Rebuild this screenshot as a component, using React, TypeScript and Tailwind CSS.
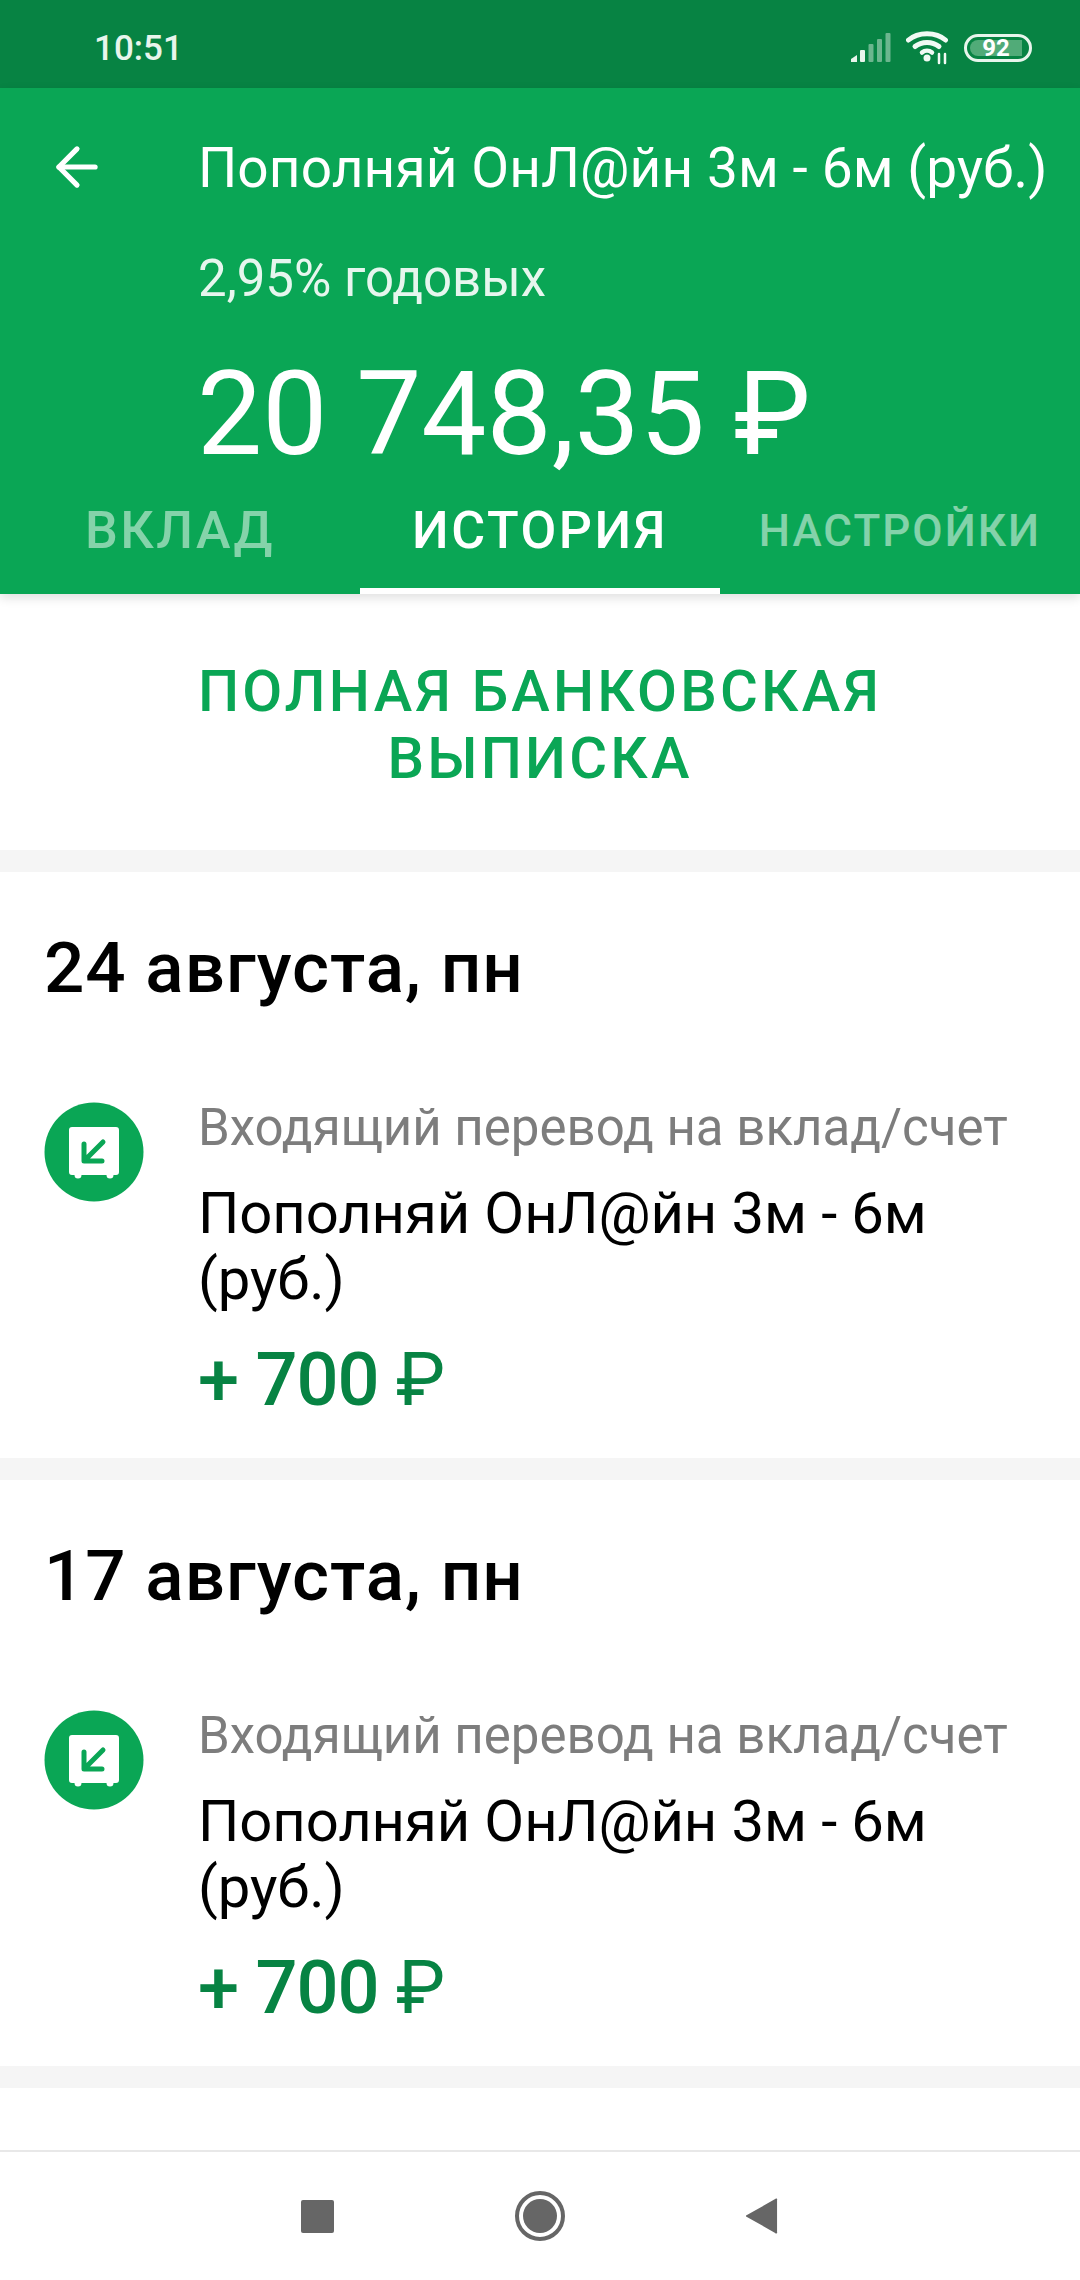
import { ArrowLeft } from "lucide-react";

const FONT = "font-['Roboto','Noto_Sans',sans-serif]";

// ── Status bar glyphs ─────────────────────────────────────────────

function SignalIcon() {
  return (
    <svg width="42" height="30" viewBox="0 0 42 30" fill="#e8f5ec">
      <path d="M1 29v-3l6-4v7z" />
      <rect x="10" y="17" width="5" height="12" rx="1" />
      <rect x="18.500" y="11" width="5" height="18" rx="1" opacity="0.45" />
      <rect x="27" y="6" width="5" height="23" rx="1" opacity="0.45" />
      <rect x="35.500" y="0" width="5" height="29" rx="1" opacity="0.45" />
    </svg>
  );
}

function WifiIcon() {
  return (
    <svg width="44" height="34" viewBox="0 0 44 34" fill="none" stroke="#f1faf4" strokeLinecap="round">
      <path d="M2.500 9C12 0.500 30 0.500 39.500 9" strokeWidth="5" />
      <path d="M9 15.500C15.500 10 26.500 10 33 15.500" strokeWidth="5" />
      <path d="M16 21.500C19 19 23 19 26 21.500" strokeWidth="4.500" />
      <circle cx="21" cy="27" r="3.500" fill="#f1faf4" stroke="none" />
      <path d="M33 23v9M39 23v9" strokeWidth="2.500" />
    </svg>
  );
}

function Battery() {
  return (
    <div className="flex h-[28px] w-[68px] items-center rounded-full border-[3px] border-[#e8f5ec] p-[3px]">
      <div className="flex h-full w-[52px] items-center justify-center rounded-l-full rounded-r-[6px] bg-[#51ab78] text-[24px] font-bold leading-none text-white">
        92
      </div>
    </div>
  );
}

// ── Deposit icon ──────────────────────────────────────────────────

function IncomingIcon() {
  return (
    <svg width="100" height="100" viewBox="0 0 100 100" className="shrink-0">
      <circle cx="50" cy="50" r="49.500" fill="#0aa655" />
      <path
        d="M25 28a3 3 0 0 1 3-3h44a3 3 0 0 1 3 3v42a3 3 0 0 1-3 3h-2.500a3.500 3.500 0 0 1-7 0h-25a3.500 3.500 0 0 1-7 0H28a3 3 0 0 1-3-3z"
        fill="#fff"
      />
      <path
        d="M40 42v17h18M42 57l17-17"
        fill="none"
        stroke="#0aa655"
        strokeWidth="5"
        strokeLinecap="round"
        strokeLinejoin="round"
      />
    </svg>
  );
}

// ── Operation card ────────────────────────────────────────────────

function OperationCard({ date }: { date: string }) {
  return (
    <section className="h-[586px] bg-white pl-[44px] pt-[58px]">
      <h3 className="text-[71px] font-medium leading-[76px] tracking-[1px] text-black">{date}</h3>
      <div className="mt-[96px] flex gap-[54px]">
        <IncomingIcon />
        <div className="-mt-[2px] w-[830px]">
          <p className="text-[51px] leading-[56px] text-[#7d7d7d]">Входящий перевод на вклад/счет</p>
          <p className="mt-[24px] text-[58px] leading-[66px] tracking-[-0.100px] text-black">
            Пополняй ОнЛ@йн 3м - 6м (руб.)
          </p>
          <p className="mt-[23px] text-[74px] font-medium leading-[90px] tracking-[-1px] text-[#078343]">
            + 700 <span className="font-normal">₽</span>
          </p>
        </div>
      </div>
    </section>
  );
}

const TABS = [
  { label: "ВКЛАД", className: "text-[52px] tracking-[2.500px] text-white/50" },
  { label: "ИСТОРИЯ", className: "text-[52px] tracking-[2.500px] text-white" },
  { label: "НАСТРОЙКИ", className: "text-[44px] tracking-[2px] text-white/50" },
];

export default function App() {
  return (
    <div className={`${FONT} flex h-[2280px] w-[1080px] flex-col overflow-hidden bg-white`}>
      {/* Status bar */}
      <div className="flex h-[88px] shrink-0 items-center justify-between bg-[#078343] pl-[94px] pr-[48px] pt-[8px] text-white">
        <span className="translate-y-[1px] text-[35px] font-medium text-[#e8f5ec]">10:51</span>
        <div className="flex items-center gap-[14px]">
          <SignalIcon />
          <WifiIcon />
          <Battery />
        </div>
      </div>

      {/* Deposit header */}
      <header className="relative z-10 h-[506px] shrink-0 bg-[#0aa655] shadow-[0_4px_10px_rgba(0,0,0,0.12)]">
        <div className="flex h-[115px] items-end">
          <div className="flex w-[198px] justify-start pl-[46px]">
            <ArrowLeft size={62} color="#fff" strokeWidth={2} className="-translate-y-[5px]" />
          </div>
          <p className="whitespace-nowrap text-[55px] leading-[70px] tracking-[0.100px] text-white">
            Пополняй ОнЛ@йн 3м - 6м (руб.)
          </p>
        </div>
        <p className="mt-[46px] pl-[198px] text-[51px] leading-[60px] text-white/90">2,95% годовых</p>
        <p className="mt-[40px] pl-[197px] text-[116px] leading-[130px] text-white">20 748,35 ₽</p>
        <div className="grid grid-cols-3">
          {TABS.map((tab, i) => (
            <div
              key={tab.label}
              className={`flex h-[115px] items-center justify-center border-b-[6px] pb-[6px] font-medium ${tab.className} ${
                i === 1 ? "border-white" : "border-transparent"
              }`}
            >
              {tab.label}
            </div>
          ))}
        </div>
      </header>

      {/* Full statement link */}
      <div className="flex h-[256px] shrink-0 items-center justify-center px-[180px] pt-[6px] text-center text-[58px] font-medium leading-[67px] tracking-[3.200px] text-[#0aa655]">
        ПОЛНАЯ БАНКОВСКАЯ ВЫПИСКА
      </div>

      {/* Operations */}
      <div className="flex flex-col gap-[22px] bg-[#f5f5f5] py-[22px]">
        <OperationCard date="24 августа, пн" />
        <OperationCard date="17 августа, пн" />
      </div>

      <div className="flex-1" />

      {/* Navigation bar */}
      <nav className="flex h-[130px] shrink-0 items-center justify-center gap-[181px] border-t-2 border-[#e8e8e8] bg-white pr-[1px]">
        <div className="h-[33px] w-[33px] rounded-[2px] bg-[#666]" />
        <div className="flex h-[50px] w-[50px] items-center justify-center rounded-full border-[4px] border-[#666]">
          <div className="h-[34px] w-[34px] rounded-full bg-[#666]" />
        </div>
        <svg width="32" height="38" viewBox="0 0 34 38" fill="#666">
          <path d="M33 2v34a1 1 0 0 1-2 1L1 20a1 1 0 0 1 0-2L31 1a1 1 0 0 1 2 1z" />
        </svg>
      </nav>
    </div>
  );
}
